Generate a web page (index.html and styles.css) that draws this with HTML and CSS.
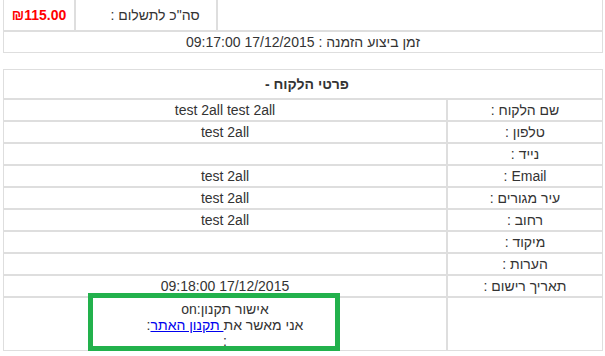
FILE: index.html
```html
<!DOCTYPE html>
<html lang="he" dir="rtl">
<head>
<meta charset="utf-8">
<title>פרטי הזמנה</title>
<link rel="stylesheet" href="styles.css">
</head>
<body>
<div class="page">
  <table class="grid total-table">
    <tr class="total-row">
      <td class="empty-cell"></td>
      <td class="total-label">סה"כ לתשלום :</td>
      <td class="total-amount">₪115.00</td>
    </tr>
    <tr class="row">
      <td colspan="3" class="center">זמן ביצוע הזמנה : 17/12/2015 09:17:00</td>
    </tr>
  </table>

  <table class="grid customer-table">
    <colgroup>
      <col class="col-label">
      <col class="col-value">
    </colgroup>
    <tr class="head-row">
      <td colspan="2" class="head">פרטי הלקוח -</td>
    </tr>
    <tr class="row"><td class="label">שם הלקוח :</td><td class="value">test 2all test 2all</td></tr>
    <tr class="row"><td class="label">טלפון :</td><td class="value">test 2all</td></tr>
    <tr class="row"><td class="label">נייד :</td><td class="value"></td></tr>
    <tr class="row"><td class="label">Email :</td><td class="value">test 2all</td></tr>
    <tr class="row"><td class="label">עיר מגורים :</td><td class="value">test 2all</td></tr>
    <tr class="row"><td class="label">רחוב :</td><td class="value">test 2all</td></tr>
    <tr class="row"><td class="label">מיקוד :</td><td class="value"></td></tr>
    <tr class="row"><td class="label">הערות :</td><td class="value"></td></tr>
    <tr class="row"><td class="label">תאריך רישום :</td><td class="value">17/12/2015 09:18:00</td></tr>
    <tr class="terms-row">
      <td class="label"></td>
      <td class="value terms">
        <div class="terms-line">אישור תקנון:on</div>
        <div class="terms-line">אני מאשר את<a href="#"> תקנון האתר</a>:</div>
        <div class="terms-line">:</div>
        <div class="highlight"></div>
      </td>
    </tr>
  </table>
</div>
</body>
</html>
```

FILE: styles.css
```css
html, body {
  margin: 0;
  padding: 0;
  background: #fff;
}

body {
  font-family: "Liberation Sans", Arial, sans-serif;
  font-size: 14px;
  line-height: 18px;
  color: #333;
  overflow: hidden;
}

.page {
  padding: 0 2px 0 3px;
  margin-top: -1px;
}

.grid {
  width: 600px;
  border-collapse: separate;
  border-spacing: 0;
  table-layout: fixed;
}

.grid td {
  border: 1px solid #dedede;
  text-align: center;
  vertical-align: middle;
  padding: 1px 0;
  box-sizing: border-box;
}

.row td {
  height: 22px;
}

.total-row td {
  height: 32px;
  padding: 6px 0;
}

.total-label {
  width: 142px;
  padding-left: 18px !important;
}

.total-amount {
  width: 72px;
  color: #ff0000;
  font-weight: bold;
}

.customer-table {
  margin-top: 16px;
}

.col-label {
  width: 156px;
}

.head-row td {
  height: 30px;
  padding: 5px 0 5px 0;
  padding-left: 8px;
  font-weight: bold;
}

.terms-row td {
  height: 54px;
  padding: 3px 0 1px;
  vertical-align: top;
}

.terms {
  position: relative;
  line-height: 16px;
}

.terms-line {
  height: 16px;
}

.terms a {
  color: #0000ee;
  text-decoration: underline;
}

.highlight {
  position: absolute;
  left: 84px;
  top: -5px;
  width: 252px;
  height: 58px;
  box-sizing: border-box;
  border: 5px solid #22b14c;
  pointer-events: none;
}
```
